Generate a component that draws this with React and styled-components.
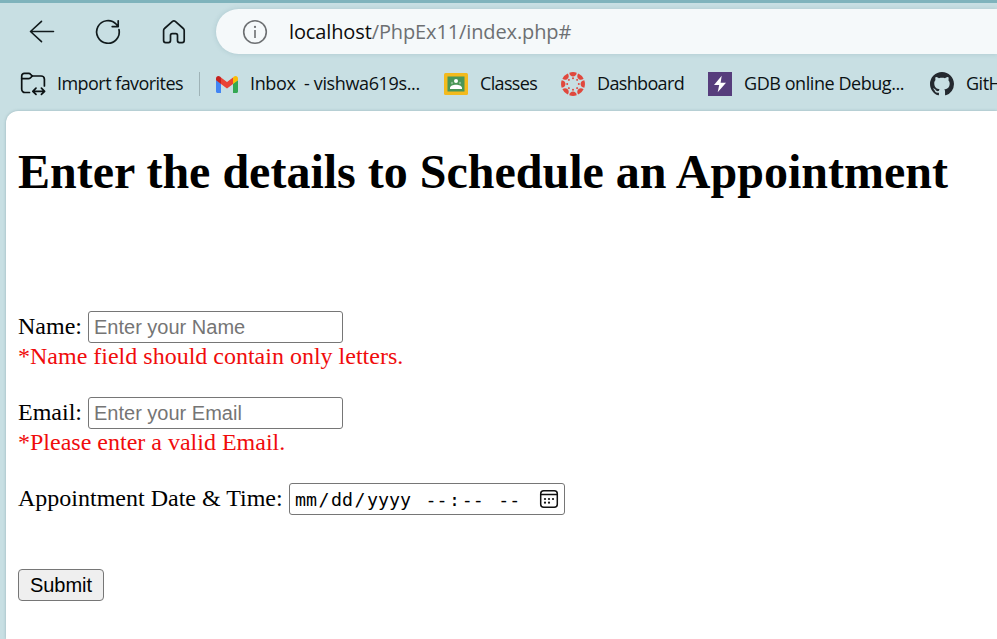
import React from 'react';
import styled, { createGlobalStyle } from 'styled-components';
import { VscGithubInverted } from 'react-icons/vsc';

const GlobalStyle = createGlobalStyle`
  * { box-sizing: border-box; }
  body { margin: 0; background: #c8dfe3; overflow: hidden; }
`;

const Browser = styled.div`
  height: 639px;
  width: 997px;
  overflow: hidden;
  display: flex;
  flex-direction: column;
  background: #c8dfe3;
  border-top: 3px solid #7fb3bc;
  font-family: 'Open Sans', 'Noto Sans', sans-serif;
`;

const Toolbar = styled.header`
  display: flex;
  align-items: center;
  flex: none;
  height: 57px;
  padding-left: 28px;
`;

const NavButton = styled.button`
  display: flex;
  width: 28px;
  height: 28px;
  margin-right: 38px;
  padding: 0;
  border: 0;
  background: none;
  color: #111a1c;
`;

const AddressBar = styled.div`
  display: flex;
  align-items: center;
  flex: 1;
  height: 45px;
  margin-left: -10px;
  padding-left: 25px;
  border-radius: 23px 0 0 23px;
  background: #f5f9fa;
  box-shadow: 0 0 5px rgba(70, 120, 130, 0.22);
  color: #6d7072;
`;

const Url = styled.span`
  margin-left: 19px;
  font-size: 20px;
  line-height: 28px;
  letter-spacing: ${(p) => p.$spacing}px;
  white-space: nowrap;
`;

const Host = styled.span`
  color: #0c0c0c;
`;

const Favorites = styled.nav`
  flex: none;
  display: flex;
  align-items: center;
  height: 48px;
  padding-left: 20px;
`;

const Favorite = styled.a`
  display: flex;
  align-items: center;
  flex: none;
  width: ${(p) => p.$width}px;
  color: #0b1113;
`;

const FavoriteIcon = styled.span`
  display: flex;
  flex: none;
  width: ${(p) => p.$slot || 36}px;
`;

const FavoriteLabel = styled.span`
  padding-bottom: 2px;
  font-size: 18px;
  line-height: 22px;
  letter-spacing: ${(p) => p.$spacing}px;
  white-space: pre;
`;

const Divider = styled.span`
  flex: none;
  width: 1px;
  height: 24px;
  margin-right: 16px;
  background: #9fb3b7;
`;

const Page = styled.main`
  flex: 1;
  margin: 3px 0 0 6px;
  padding: 0 12px;
  border-radius: 12px 0 0 0;
  background: #fff;
  box-shadow: 0 0 3px rgba(60, 100, 110, 0.35);
  color: #000;
  font: 24px/27px 'Liberation Serif', 'Times New Roman', serif;
`;

const Title = styled.h1`
  margin: 0;
  padding-top: 33px;
  height: 200px;
  font-size: 48px;
  line-height: 55px;
  white-space: nowrap;
`;

const Field = styled.div`
  height: 86px;
`;

const FieldRow = styled.div`
  display: flex;
  align-items: center;
  gap: 6px;
  height: 32px;
`;

const Label = styled.label`
  flex: none;
  width: ${(p) => p.$width}px;
  height: 28px;
  white-space: nowrap;
`;

const TextInput = styled.input`
  width: 255px;
  height: 32px;
  margin: 0;
  padding: 1px 5px;
  border: 1px solid #767676;
  border-radius: 3px;
  outline: 0;
  background: #fff;
  font: 20px 'Liberation Sans', Arial, sans-serif;
  &::placeholder { color: #757575; opacity: 1; }
`;

const ErrorText = styled.div`
  color: #f00c0c;
  line-height: 27px;
  white-space: nowrap;
`;

const DateInput = styled.div`
  display: flex;
  align-items: center;
  width: 276px;
  height: 32px;
  padding: 0 5px;
  border: 1px solid #767676;
  border-radius: 3px;
  font: 18.300px 'DejaVu Sans Mono', 'Liberation Mono', monospace;
  & > svg { margin-left: auto; }
`;

const DateGroup = styled.span`
  display: flex;
  gap: 1.500px;
  margin-right: 14.500px;
`;

const SubmitButton = styled.button`
  display: block;
  width: 86px;
  height: 32px;
  padding: 0;
  border: 1px solid #767676;
  border-radius: 4px;
  background: #efefef;
  color: #000;
  font: 20px/28px 'Liberation Sans', Arial, sans-serif;
`;

const BackIcon = () => (
  <svg width="28" height="28" viewBox="0 0 28 28" fill="none" stroke="currentColor" strokeWidth="1.6" strokeLinecap="round" strokeLinejoin="round">
    <path d="M25.5 13.500H2.500M13.500 3.300 2.500 13.500l11 10.200" />
  </svg>
);

const ReloadIcon = () => (
  <svg width="28" height="28" viewBox="0 0 28 28" fill="none" stroke="currentColor" strokeWidth="1.7" strokeLinecap="round" strokeLinejoin="round">
    <path d="M25 11.500A11.300 11.300 0 1 1 22.300 6.300L24.200 8.600M24.200 2.800v5.800h-6" />
  </svg>
);

const HomeIcon = () => (
  <svg width="28" height="28" viewBox="0 0 28 28" fill="none" stroke="currentColor" strokeWidth="1.7" strokeLinejoin="round">
    <path d="M3.6 12.400c0-.8.3-1.400.9-1.900L12.500 3.400a2.100 2.100 0 0 1 2.800 0l8 7.100c.6.500.9 1.100.9 1.900v10.200a2 2 0 0 1-2 2h-2.700a2 2 0 0 1-2-2v-5.200a1.700 1.700 0 0 0-1.700-1.700h-3.600a1.700 1.700 0 0 0-1.700 1.700v5.200a2 2 0 0 1-2 2H5.600a2 2 0 0 1-2-2Z" />
  </svg>
);

const InfoIcon = () => (
  <svg width="29" height="28" viewBox="0 0 29 28" fill="none" stroke="currentColor" strokeWidth="1.6">
    <circle cx="14" cy="14" r="11.3" />
    <path d="M14 12v8" />
    <circle cx="14" cy="8.9" r="1.1" fill="currentColor" stroke="none" />
  </svg>
);

const FolderIcon = () => (
  <svg width="26" height="24" viewBox="0 0 26 24" fill="none" stroke="currentColor" strokeWidth="1.7" strokeLinecap="round" strokeLinejoin="round">
    <path d="M9.5 20.500H5a3.300 3.300 0 0 1-3.300-3.300V4A2.600 2.600 0 0 1 4.300 1.400h4.400c.8 0 1.400.3 1.900.9l1.700 1.700h8.800A3.300 3.300 0 0 1 24.400 7.300V14" />
    <path d="M1.700 6.600h6.700c.8 0 1.500-.3 2-.8L12.300 4" />
    <path d="M13 19.300h11.200M16 16.200l-3.200 3.100 3.200 3.100M21.400 16.200l3.200 3.100-3.200 3.100" />
  </svg>
);

const GmailIcon = () => (
  <svg width="22" height="17" viewBox="0 0 22 17">
    <path fill="#4285f4" d="M0 4v11.500C0 16.300.7 17 1.500 17H5V7.500Z" />
    <path fill="#34a853" d="M17 7.500V17h3.500c.8 0 1.500-.7 1.500-1.500V4Z" />
    <path fill="#fbbc04" d="M17 1.500V8l5-3.800V2.500C22 .3 19.700-.7 18 .6Z" />
    <path fill="#ea4335" d="m5 8V1.500l6 4.600 6-4.600V8l-6 4.500Z" />
    <path fill="#c5221f" d="M0 2.500v1.700L5 8V1.500L4 .6C2.300-.7 0 .3 0 2.500Z" />
  </svg>
);

const ClassroomIcon = () => (
  <svg width="24" height="22" viewBox="0 0 24 22">
    <rect width="24" height="22" rx="1.5" fill="#f3ba1d" />
    <rect x="3.500" y="3.500" width="17" height="15" fill="#4a9657" />
    <circle cx="12" cy="8" r="2" fill="#fff" />
    <circle cx="8" cy="10" r="1.200" fill="#86b98e" />
    <circle cx="16" cy="10" r="1.200" fill="#86b98e" />
    <path d="M6 16v-1c0-4.500 12-4.500 12 0v1Z" fill="#fff" />
  </svg>
);

const CanvasIcon = () => (
  <svg width="24" height="24" viewBox="-12 -12 24 24" fill="#e0483d">
    {[0, 45, 90, 135, 180, 225, 270, 315].map((angle) => (
      <g key={angle} transform={`rotate(${angle})`}>
        <path d="M-3.7-11.300Q0-12.600 3.700-11.300C3.400-6.300-3.400-6.300-3.700-11.300Z" />
        <circle cy="-5.800" r="1" />
      </g>
    ))}
  </svg>
);

const LightningIcon = () => (
  <svg width="24" height="24" viewBox="0 0 24 24">
    <rect width="24" height="24" fill="#563d7c" />
    <path d="M13.700 3.800 6 13h5.200l-1.500 7.300L18 10.700h-5.400Z" fill="#fff" />
  </svg>
);

const CalendarIcon = () => (
  <svg width="20" height="20" viewBox="0 0 20 20" fill="none" stroke="#111" strokeWidth="1.5">
    <rect x="1.700" y="1.700" width="16.600" height="16.600" rx="3" />
    <path d="M2 5.500h16" />
    <g fill="#111" stroke="none">
      <circle cx="6" cy="10" r="1.100" /><circle cx="10" cy="10" r="1.100" /><circle cx="14" cy="10" r="1.100" />
      <circle cx="6" cy="13.700" r="1.100" /><circle cx="10" cy="13.700" r="1.100" />
    </g>
  </svg>
);

const favorites = [
  { label: 'Inbox  - vishwa619s...', icon: <GmailIcon />, width: 228, slot: 34, spacing: -0.37 },
  { label: 'Classes', icon: <ClassroomIcon />, width: 117, spacing: -0.65 },
  { label: 'Dashboard', icon: <CanvasIcon />, width: 147, spacing: -0.65 },
  { label: 'GDB online Debug...', icon: <LightningIcon />, width: 222, spacing: -0.44 },
  { label: 'GitHub', icon: <VscGithubInverted size={24} color="#24292f" />, width: 110, spacing: -0.5 },
];

const fields = [
  { label: 'Name:', placeholder: 'Enter your Name', error: '*Name field should contain only letters.' },
  { label: 'Email:', placeholder: 'Enter your Email', error: '*Please enter a valid Email.' },
];

const dateGroups = [
  ['mm', '/', 'dd', '/', 'yyyy'],
  ['--', ':', '--'],
  ['--'],
];

export default function App() {
  return (
    <Browser>
      <GlobalStyle />
      <Toolbar>
        <NavButton aria-label="Back"><BackIcon /></NavButton>
        <NavButton aria-label="Refresh"><ReloadIcon /></NavButton>
        <NavButton aria-label="Home"><HomeIcon /></NavButton>
        <AddressBar>
          <InfoIcon />
          <Url $spacing={-0.12}><Host>localhost</Host>/PhpEx11/index.php#</Url>
        </AddressBar>
      </Toolbar>
      <Favorites>
        <Favorite $width={179}>
          <FavoriteIcon $slot={37}><FolderIcon /></FavoriteIcon>
          <FavoriteLabel $spacing={-0.55}>Import favorites</FavoriteLabel>
        </Favorite>
        <Divider />
        {favorites.map((f) => (
          <Favorite key={f.label} $width={f.width}>
            <FavoriteIcon $slot={f.slot}>{f.icon}</FavoriteIcon>
            <FavoriteLabel $spacing={f.spacing}>{f.label}</FavoriteLabel>
          </Favorite>
        ))}
      </Favorites>
      <Page>
        <Title>Enter the details to Schedule an Appointment</Title>
        {fields.map((f) => (
          <Field key={f.label}>
            <FieldRow>
              <Label $width={64}>{f.label}</Label>
              <TextInput placeholder={f.placeholder} />
            </FieldRow>
            <ErrorText>{f.error}</ErrorText>
          </Field>
        ))}
        <Field>
          <FieldRow>
            <Label $width={265}>Appointment Date &amp; Time:</Label>
            <DateInput>
              {dateGroups.map((group, g) => (
                <DateGroup key={g}>
                  {group.map((part, i) => <span key={i}>{part}</span>)}
                </DateGroup>
              ))}
              <CalendarIcon />
            </DateInput>
          </FieldRow>
        </Field>
        <SubmitButton>Submit</SubmitButton>
      </Page>
    </Browser>
  );
}
